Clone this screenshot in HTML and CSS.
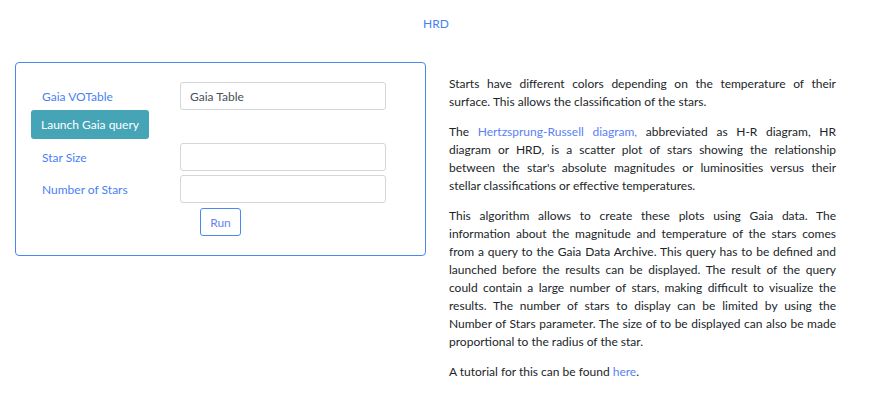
FILE: index.html
```html
<!DOCTYPE html>
<html>
<head>
<meta charset="utf-8">
<link rel="stylesheet" href="styles.css">
</head>
<body>
<header class="top">
  <span class="title">HRD</span>
</header>
<main class="main">
  <section class="card">
    <div class="row">
      <label class="lbl">Gaia VOTable</label>
      <input class="field" type="text" value="Gaia Table">
    </div>
    <div class="row row-btn">
      <button class="btn-info">Launch Gaia query</button>
    </div>
    <div class="row row-gap">
      <label class="lbl">Star Size</label>
      <input class="field" type="text">
    </div>
    <div class="row row-gap">
      <label class="lbl">Number of Stars</label>
      <input class="field" type="text">
    </div>
    <div class="row row-run">
      <span class="spacer"></span>
      <button class="btn-run">Run</button>
    </div>
  </section>
  <article class="desc">
    <p>Starts have different colors depending on the temperature of their surface. This allows the classification of the stars.</p>
    <p>The <a href="#" class="link">Hertzsprung-Russell diagram,</a> abbreviated as H-R diagram, HR diagram or HRD, is a scatter plot of stars showing the relationship between the star's absolute magnitudes or luminosities versus their stellar classifications or effective temperatures.</p>
    <p>This algorithm allows to create these plots using Gaia data. The information about the magnitude and temperature of the stars comes from a query to the Gaia Data Archive. This query has to be defined and launched before the results can be displayed. The result of the query could contain a large number of stars, making difficult to visualize the results. The number of stars to display can be limited by using the Number of Stars parameter. The size of to be displayed can also be made proportional to the radius of the star.</p>
    <p>A tutorial for this can be found <a href="#" class="link">here</a>.</p>
  </article>
</main>
</body>
</html>
```
FILE: styles.css
```css
* { box-sizing: border-box; }
body {
  margin: 0;
  font-family: Lato, "Open Sans", sans-serif;
  font-size: 12px;
  line-height: 18px;
  color: #212529;
  background: #fff;
}
.top {
  height: 48px;
  padding-top: 15px;
  text-align: center;
}
.title { color: #4a7ff5; }
.main {
  display: flex;
  align-items: flex-start;
  padding-left: 15px;
}
.card {
  width: 411px;
  margin-top: 14px;
  border: 1px solid #4a87ef;
  border-radius: 4px;
  padding: 19px 38px 19px 15px;
  display: flex;
  flex-direction: column;
}
.row {
  display: flex;
  align-items: center;
}
.row-gap { margin-top: 4px; }
.lbl {
  width: 149px;
  padding-left: 11px;
  padding-top: 1px;
  color: #4a7ff5;
}
.spacer { width: 169px; }
.field {
  width: 206px;
  height: 28px;
  border: 1px solid #d3d6da;
  border-radius: 3px;
  padding: 0 9px;
  font-family: inherit;
  font-size: 12px;
  color: #495057;
  outline: none;
}
.btn-info {
  height: 29px;
  width: 118px;
  padding: 0;
  border: none;
  border-radius: 3px;
  background: #45a4b6;
  color: #fff;
  font-family: inherit;
  font-size: 12px;
}
.row-run { margin-top: 5px; }
.btn-run {
  width: 41px;
  height: 28px;
  padding: 0;
  border: 1px solid #4a87ef;
  border-radius: 3px;
  background: #fff;
  color: #6b7ff5;
  font-family: inherit;
  font-size: 12px;
}
.desc {
  width: 387px;
  margin-left: 23px;
  padding-top: 27px;
  text-align: justify;
}
.desc p { margin: 0 0 12px; }
.link { color: #5b80f5; text-decoration: none; }
```
